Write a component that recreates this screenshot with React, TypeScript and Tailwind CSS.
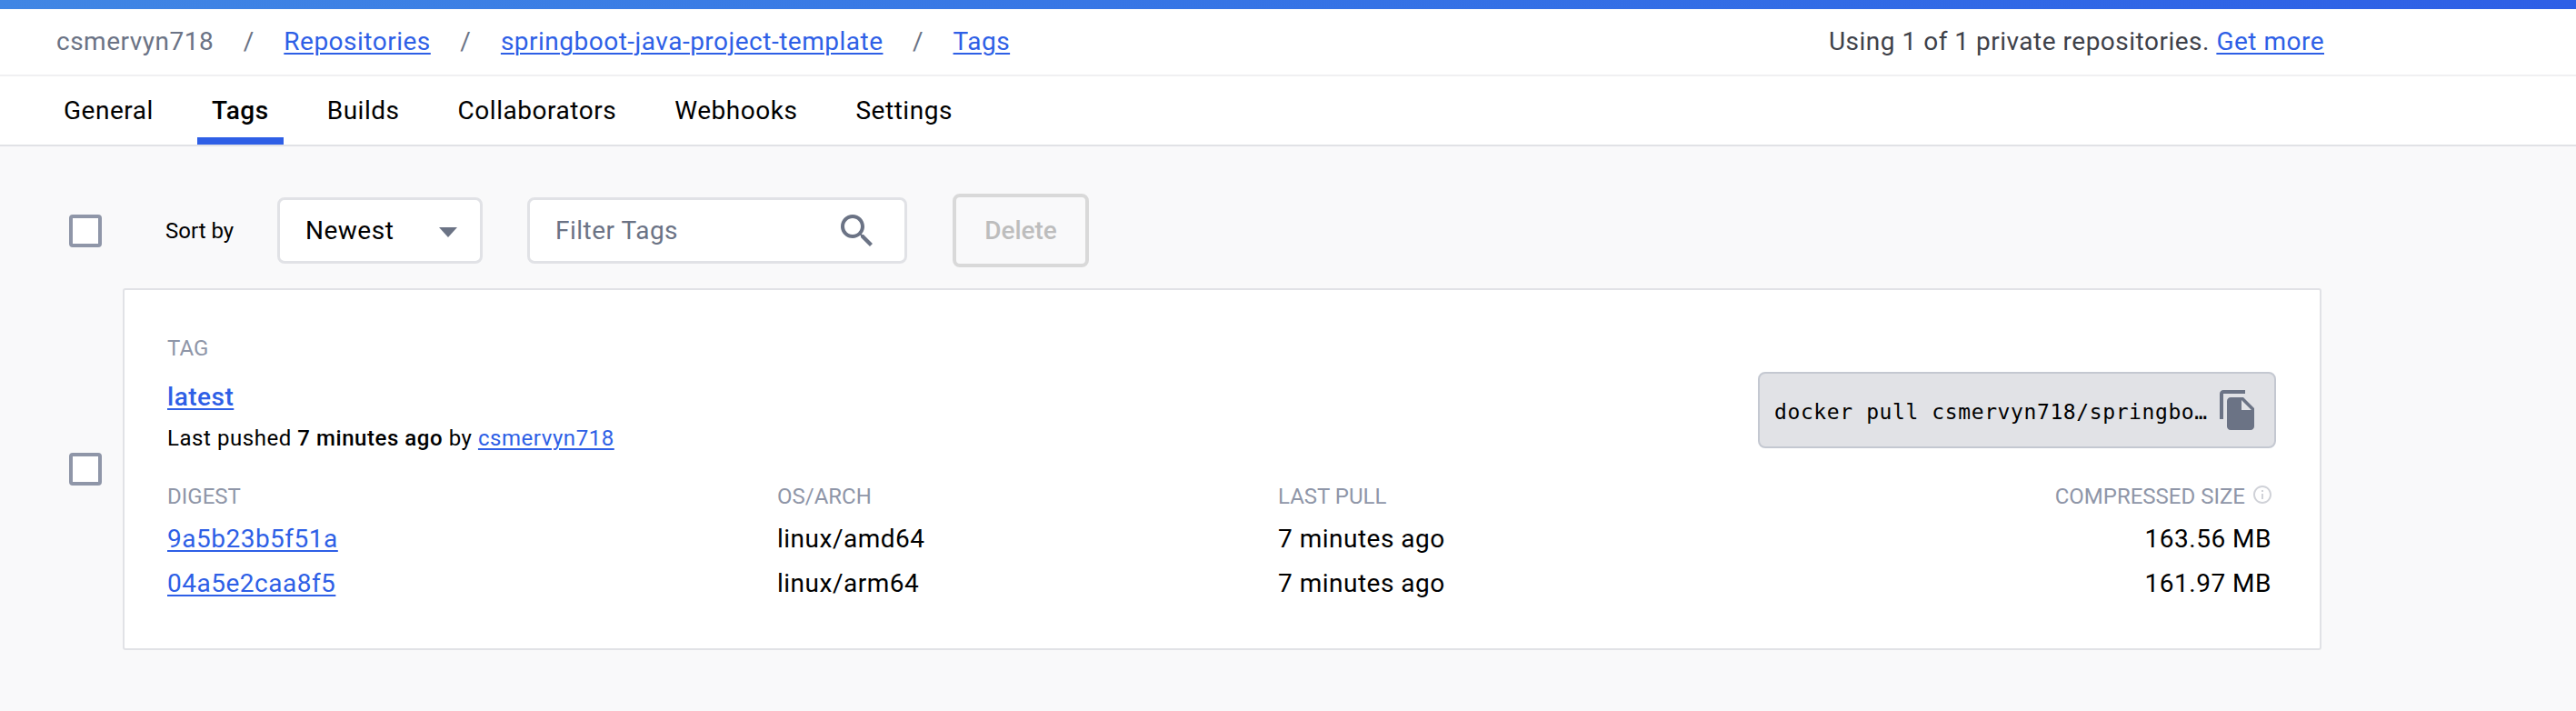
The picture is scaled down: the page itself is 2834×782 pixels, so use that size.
const LINK = 'text-[#2e5fe6] underline underline-offset-[3px] decoration-2'
const HEAD = 'text-[24px] leading-[32px] text-[#8f96a8]'

const TABS = ['General', 'Tags', 'Builds', 'Collaborators', 'Webhooks', 'Settings']

const ROWS = [
  { digest: '9a5b23b5f51a', arch: 'linux/amd64', pull: '7 minutes ago', size: '163.56 MB' },
  { digest: '04a5e2caa8f5', arch: 'linux/arm64', pull: '7 minutes ago', size: '161.97 MB' },
]

function Checkbox() {
  return <div className="w-[36px] h-[36px] shrink-0 rounded-[4px] border-[4px] border-[#8f96a8] bg-white" />
}

function Slash() {
  return <span className="text-[#6b7385] mx-[32.5px]">/</span>
}

function Breadcrumb() {
  return (
    <div className="h-[74px] border-b-2 border-[#f0f0f2] pl-[62px] pr-[277px] flex items-center justify-between text-[28px] leading-[40px] tracking-[0.5px]">
      <div className="flex items-center">
        <span className="text-[#6b7385]">csmervyn718</span>
        <Slash />
        <a className={LINK}>Repositories</a>
        <Slash />
        <a className={LINK}>springboot-java-project-template</a>
        <Slash />
        <a className={LINK}>Tags</a>
      </div>
      <div className="text-[#3e4149]">
        Using 1 of 1 private repositories. <a className={LINK}>Get more</a>
      </div>
    </div>
  )
}

function Tabs() {
  return (
    <div className="h-[77px] border-b-2 border-[#e1e2e6] pl-[54px] flex gap-8">
      {TABS.map((tab) => (
        <div
          key={tab}
          className={`px-4 flex items-center text-[28px] tracking-[0.53px] text-black ${
            tab === 'Tags' ? 'font-medium border-b-[8px] border-[#2e5fe6] pt-[8px]' : ''
          }`}
        >
          {tab}
        </div>
      ))}
    </div>
  )
}

function Toolbar() {
  return (
    <div className="flex items-center pl-[76px] mt-[52px] h-[81px]">
      <Checkbox />
      <span className="ml-[70px] w-[123px] text-[24px] text-black">Sort by</span>
      <div className="w-[226px] h-[73px] rounded-[8px] border-[3px] border-[#e1e2e6] bg-white flex items-center justify-between pl-[28px] pr-[25px]">
        <span className="text-[28px] tracking-[0.5px] text-black">Newest</span>
        <svg width="20" height="11" viewBox="0 0 20 11" className="fill-[#6b7385] mt-[3px]">
          <path d="M0 0h20L10 11z" />
        </svg>
      </div>
      <div className="ml-[49px] w-[418px] h-[73px] rounded-[8px] border-[3px] border-[#e1e2e6] bg-white flex items-center justify-between pl-[28px] pr-[28px]">
        <span className="text-[28px] tracking-[0.5px] text-[#6b7385]">Filter Tags</span>
        <svg width="48" height="48" viewBox="0 0 24 24" className="fill-[#6b7385]">
          <path d="M15.5 14h-.79l-.28-.27C15.41 12.59 16 11.11 16 9.5 16 5.91 13.09 3 9.5 3S3 5.91 3 9.5 5.91 16 9.5 16c1.61 0 3.09-.59 4.23-1.57l.27.28v.79l5 4.99L20.49 19l-4.99-5zm-6 0C7.01 14 5 11.99 5 9.5S7.01 5 9.5 5 14 7.01 14 9.5 11.99 14 9.5 14z" />
        </svg>
      </div>
      <div className="ml-[50px] w-[150px] h-[81px] rounded-[8px] border-[4px] border-[#d9d9d9] flex items-center justify-center text-[28px] font-medium text-[#bdbdbd]">
        Delete
      </div>
    </div>
  )
}

function TagCard() {
  return (
    <div className="w-[2419px] h-[398px] border-2 border-[#e1e2e6] rounded-[3px] bg-white pl-[47px] pr-[48px] pt-[48px]">
      <div className="flex justify-between items-start">
        <div>
          <div className={HEAD}>TAG</div>
          <a className={`${LINK} block mt-[18px] text-[28px] leading-[40px] font-medium tracking-[0.5px] w-fit`}>latest</a>
          <div className="mt-[8px] text-[24px] leading-[34px] tracking-[0.55px] text-black">
            Last pushed <span className="font-medium">7 minutes ago</span> by <a className={LINK}>csmervyn718</a>
          </div>
        </div>
        <div className="mt-[42px] w-[570px] h-[84px] rounded-[8px] border-2 border-[#c4c8d1] bg-[#e1e2e6] flex items-center justify-between pl-[16px] pr-[22px]">
          <span className="font-['DejaVu_Sans_Mono',monospace] text-[23px] tracking-[0.6px] pt-[4px] text-black whitespace-nowrap">
            docker pull csmervyn718/springbo…
          </span>
          <svg width="38" height="44" viewBox="2 1 19 22" className="fill-[#6b7385]">
            <path d="M16 1H4c-1.1 0-2 .9-2 2v14h2V3h12V1zm-1 4l6 6v10c0 1.1-.9 2-2 2H7.99C6.89 23 6 22.1 6 21l.01-14c0-1.1.89-2 1.99-2h7zm-1 7h5.5L14 6.5V12z" />
          </svg>
        </div>
      </div>
      <div className="mt-[31px] pr-[5px] grid grid-cols-[671px_551px_1fr]">
        <div className={HEAD}>DIGEST</div>
        <div className={HEAD}>OS/ARCH</div>
        <div className={HEAD + ' flex justify-between'}>
          <span>LAST PULL</span>
          <span className="flex items-start gap-[9px]">
            COMPRESSED SIZE
            <svg width="20" height="20" viewBox="2 2 20 20" className="fill-[#d0d2d8] mt-[4px]">
              <path d="M11 7h2v2h-2zm0 4h2v6h-2zm1-9C6.48 2 2 6.48 2 12s4.48 10 10 10 10-4.48 10-10S17.52 2 12 2zm0 18c-4.41 0-8-3.59-8-8s3.59-8 8-8 8 3.59 8 8-3.59 8-8 8z" />
            </svg>
          </span>
        </div>
      </div>
      <div className="mt-[6px] pr-[5px]">
        {ROWS.map((row) => (
          <div key={row.digest} className="grid grid-cols-[671px_551px_1fr] h-[49px] items-center text-[28px] tracking-[0.5px] text-black">
            <a className={`${LINK} w-fit`}>{row.digest}</a>
            <div>{row.arch}</div>
            <div className="flex justify-between">
              <span>{row.pull}</span>
              <span>{row.size}</span>
            </div>
          </div>
        ))}
      </div>
    </div>
  )
}

export default function App() {
  return (
    <div className="w-[2834px] h-[782px] overflow-hidden bg-[#f9f9fa] font-['Roboto',sans-serif]">
      <div className="h-[10px] bg-gradient-to-r from-[#4086e4] to-[#2e5fe6]" />
      <div className="bg-white">
        <Breadcrumb />
        <Tabs />
      </div>
      <Toolbar />
      <div className="flex items-center pl-[76px] mt-[23px] gap-[23px]">
        <Checkbox />
        <TagCard />
      </div>
    </div>
  )
}
